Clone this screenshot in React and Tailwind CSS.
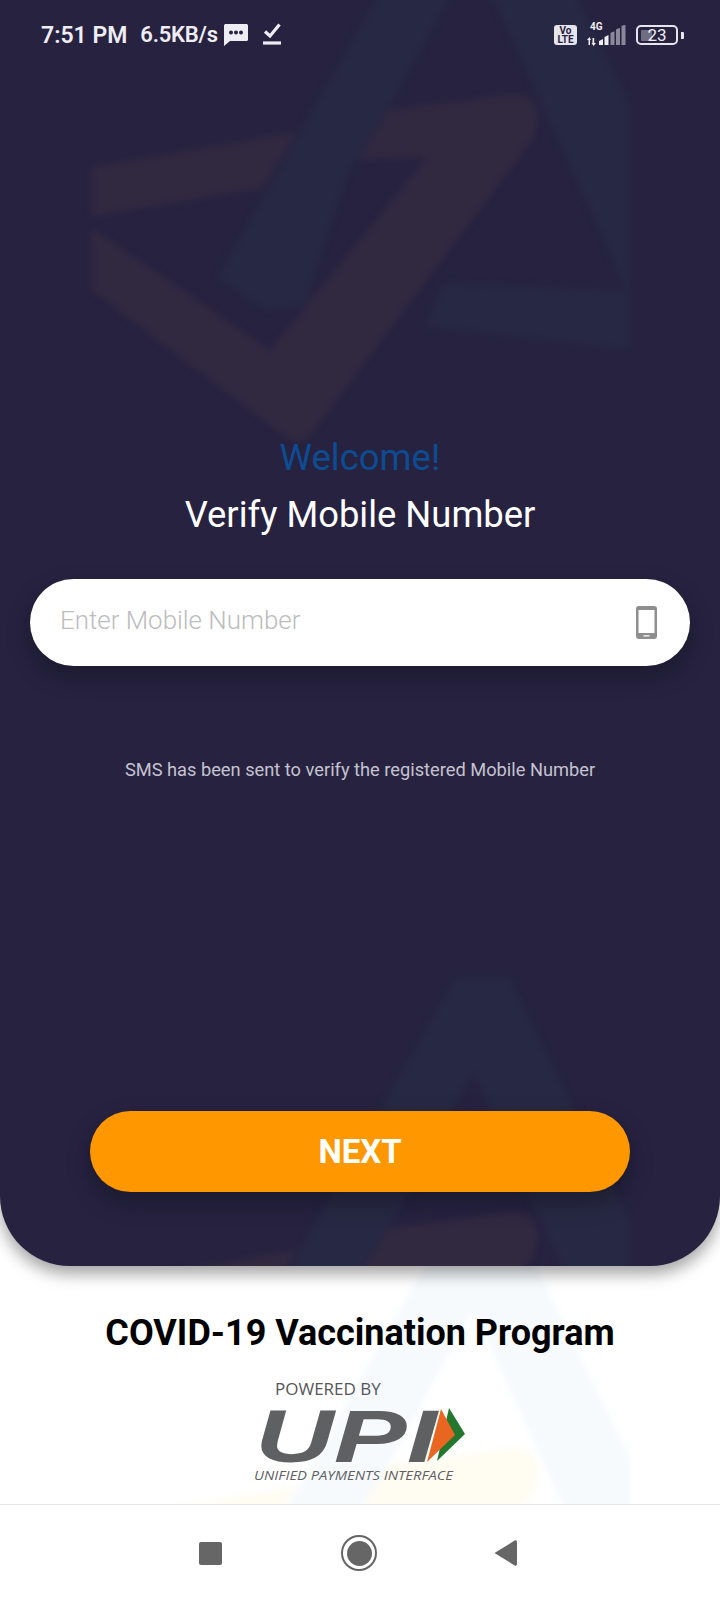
import React from 'react';

const Watermark = ({ blue, orange, className }) => (
  <svg viewBox="0 0 720 600" className={`absolute left-0 h-[600px] w-[720px] blur-[3px] ${className}`} aria-hidden="true">
    <path
      fill={blue}
      d="M455 0 Q481 -6 510 0 L630 245 L630 491 L424 468 L443 424 L626 431 L473 96 L389 251 L347 318 L305 448 L263 451 L217 418 Z"
    />
    <path fill={orange} d="M91 308 L297 273 L263 329 L91 358 Z" />
    <path
      fill={orange}
      d="M91 368 L270 491 L427 298 L358 301 L389 251 L505 236 Q540 232 538 262 Q536 280 527 288 L309 578 Q298 586 285 578 L91 431 Z"
    />
  </svg>
);

const StatusBar = () => (
  <div className="relative flex h-[70px] items-center justify-between pl-[41px] pr-[36px] text-[#efedf4]">
    <div className="flex items-center">
      <span className="text-[23px] leading-none font-semibold">7:51 PM</span>
      <span className="ml-[13px] text-[22px] leading-none font-semibold tracking-[-0.2px]">6.5KB/s</span>
      <svg viewBox="0 0 24 22" className="ml-[6px] h-[22px] w-[24px]" fill="currentColor">
        <path d="M1.5 0 H22.5 Q24 0 24 1.5 V15.5 Q24 17 22.5 17 H6 L0 22 V1.5 Q0 0 1.5 0 Z" />
        <circle cx="7" cy="8.5" r="2" fill="#262240" />
        <circle cx="12" cy="8.5" r="2" fill="#262240" />
        <circle cx="17" cy="8.5" r="2" fill="#262240" />
      </svg>
      <svg viewBox="0 0 18 22" className="mt-[-3px] ml-[15px] h-[22px] w-[18px]" fill="none" stroke="currentColor">
        <path d="M2 8.5 L7 13 L16.5 1.5" strokeWidth="3.2" />
        <path d="M0 20 H18" strokeWidth="3.2" />
      </svg>
    </div>
    <div className="flex items-center">
      <div className="flex h-[20px] w-[23px] flex-col items-center justify-center rounded-[3px] bg-[#e6e4ec] text-[10px] leading-[9px] font-bold text-[#262240]">
        <span>Vo</span>
        <span>LTE</span>
      </div>
      <div className="relative ml-[10px] h-[22px] w-[40px]">
        <span className="absolute top-[-3px] left-[3px] text-[10px] leading-[11px] font-bold">4G</span>
        <svg viewBox="0 0 40 22" className="h-[22px] w-[40px]" fill="currentColor">
          <path d="M1.5 21 V16 L0 16 L2.5 13 L4 16 H3 V21 Z" />
          <path d="M5.5 14 V19 L4.5 19 L6.5 22 L9 19 H7.2 V14 Z" />
          <path d="M12 21 V17 L16 15 V21 Z" />
          <path d="M17.5 21 V13 L21.5 11 V21 Z" />
          <path d="M23.5 21 V9 Q25 7.5 27.5 7.5 V21 Z" opacity="0.5" />
          <path d="M29 21 V5.5 Q31 4 33 4 V21 Z" opacity="0.5" />
          <path d="M34.5 21 V2 Q36 1 38.5 1 V21 Z" opacity="0.5" />
        </svg>
      </div>
      <div className="relative ml-[9px] flex h-[20px] w-[42px] items-center justify-center rounded-[5px] border-[2.5px] border-[#e6e4ec]">
        <span className="absolute top-[2.5px] bottom-[2.5px] left-[2.5px] w-[11px] rounded-[1px] bg-[#6f6d82]" />
        <span className="relative text-[17px] leading-none">23</span>
      </div>
      <span className="ml-[3px] h-[7px] w-[3px] rounded-r-[1px] bg-[#e6e4ec]" />
    </div>
  </div>
);

const UpiLogo = () => (
  <svg viewBox="0 -20 220 110" className="h-[110px] w-[220px]">
    <text
      x="1"
      y="55"
      fontFamily="'Liberation Sans', sans-serif"
      fontSize="74"
      fontWeight="700"
      fontStyle="italic"
      textLength="182"
      lengthAdjust="spacingAndGlyphs"
      fill="#5f6062"
    >
      UPI
    </text>
    <polygon points="195,1 211,27 183,54" fill="#23772f" />
    <polygon points="187,2 201,28 173,55" fill="#e8661f" />
    <text
      x="0"
      y="73"
      fontFamily="'Open Sans', sans-serif"
      fontSize="13"
      fontStyle="italic"
      textLength="199"
      lengthAdjust="spacingAndGlyphs"
      fill="#5f6062"
    >
      UNIFIED PAYMENTS INTERFACE
    </text>
  </svg>
);

const App = () => (
  <div className="relative flex h-[1600px] w-[720px] flex-col overflow-hidden bg-white font-['Roboto',sans-serif]">
    <Watermark blue="#f6fafd" orange="#fffcf2" className="top-[1213px]" />

    <main className="relative z-10 h-[1266px] shrink-0 overflow-hidden rounded-b-[70px] bg-[#262240] shadow-[0_8px_16px_rgba(0,0,0,0.36)]">
      <Watermark blue="#272843" orange="#312940" className="top-[-141px]" />
      <Watermark blue="#272843" orange="#312940" className="top-[977px]" />

      <div className="relative flex h-full flex-col">
        <StatusBar />

        <div className="flex flex-col items-center">
          <h2 className="mt-[366px] text-[36.5px] leading-[44px] text-[#0d4c92]">Welcome!</h2>
          <h1 className="mt-[13px] text-[36.4px] leading-[44px] text-white">Verify Mobile Number</h1>
        </div>

        <div className="mx-[30px] mt-[42px] flex h-[87px] items-center justify-between rounded-full bg-white pr-[33px] pl-[30px] shadow-[0_10px_24px_rgba(0,0,0,0.28)]">
          <input
            type="text"
            placeholder="Enter Mobile Number"
            className="mb-[4px] w-[400px] bg-transparent text-[25.9px] font-light outline-none placeholder:text-[#bcbcbc]"
          />
          <svg viewBox="0 0 21 33" className="h-[33px] w-[21px]" fill="#8e8e8e">
            <path
              fillRule="evenodd"
              d="M3 0 H18 Q21 0 21 3 V30 Q21 33 18 33 H3 Q0 33 0 30 V3 Q0 0 3 0 Z M2.5 4 V27 H18.5 V4 Z M7.5 29.2 V30.6 H13.5 V29.2 Z"
            />
          </svg>
        </div>

        <p className="mt-[92px] text-center text-[18.25px] leading-[24px] text-[#c5c3cf]">
          SMS has been sent to verify the registered Mobile Number
        </p>

        <button
          type="button"
          className="mx-[90px] mt-[329px] h-[81px] rounded-full bg-[#ff9800] text-[33px] font-bold text-white shadow-[0_10px_24px_rgba(0,0,0,0.28)]"
        >
          NEXT
        </button>
      </div>
    </main>

    <section className="relative flex h-[238px] shrink-0 flex-col items-center">
      <h3 className="mt-[44px] text-[36px] leading-[46px] font-bold text-black">COVID-19 Vaccination Program</h3>
      <p className="mt-[23px] ml-[275px] self-start text-[17px] leading-[20px] font-['Open_Sans',sans-serif] text-[#555659]">POWERED BY</p>
      <div className="mt-[-12px] ml-[254px] self-start">
        <UpiLogo />
      </div>
    </section>

    <nav className="relative flex h-[96px] items-center border-t border-[#e5e5e5] bg-white pb-[1px]">
      <span className="absolute top-[37px] left-[199px] h-[23px] w-[23px] rounded-[2px] bg-[#666666]" />
      <span className="absolute top-[30px] left-[341px] flex h-[36px] w-[36px] items-center justify-center rounded-full border-[2.5px] border-[#666666]">
        <span className="h-[25px] w-[25px] rounded-full bg-[#666666]" />
      </span>
      <svg viewBox="0 0 23 26" className="absolute top-[35px] left-[494px] h-[26px] w-[23px]" fill="#666666">
        <path d="M0.5 13 L21 0.3 Q23 0 23 2 V24 Q23 26 21 25.7 Z" />
      </svg>
    </nav>
  </div>
);

export default App;
